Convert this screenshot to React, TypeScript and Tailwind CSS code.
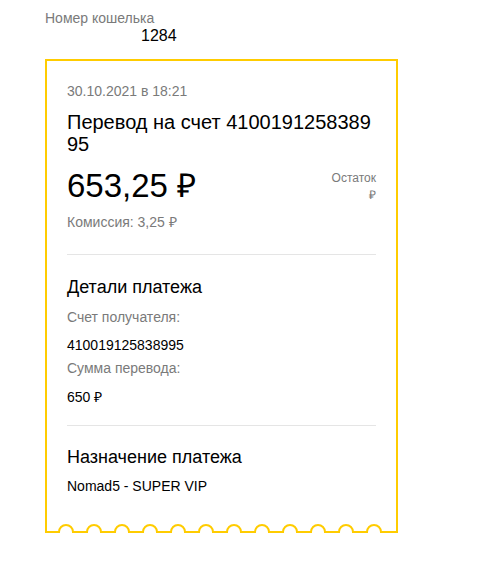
import React from "react";

const arcs = Array.from({ length: 12 }, (_, k) => 14 + 28 * k);

function Wave() {
  let d = "M1 0 V11";
  for (const x of arcs) {
    d += ` H${x} A7 7 0 0 1 ${x + 14} 11`;
  }
  d += " H352 V0";
  return (
    <svg width="353" height="13" viewBox="0 0 353 13" className="block">
      <path d={d} fill="none" stroke="#ffcc00" strokeWidth="2" />
    </svg>
  );
}

export default function App() {
  return (
    <div className="min-h-[568px] w-[482px] bg-white font-['Liberation_Sans',Arial,sans-serif] text-black">
      <div className="pt-[10px] pl-[45px] text-[14px] leading-[16px] text-[#7a7a7a]">Номер кошелька</div>
      <div className="mt-[1px] pl-[141px] text-[16px] leading-[18px]">1284</div>
      <div className="ml-[45px] mt-[14px] w-[353px]">
        <div className="border-x-2 border-t-2 border-[#ffcc00] px-5 pt-[22px] pb-[27px]">
          <div className="text-[14px] leading-[16px] text-[#7a7a7a]">30.10.2021 в 18:21</div>
          <div className="mt-[12px] break-all text-[20px] leading-[22px]">
            Перевод на счет 410019125838995
          </div>
          <div className="mt-[12px] flex items-start justify-between">
            <div className="text-[33px] leading-[38px]">653,25 ₽</div>
            <div className="mt-[3px] text-right text-[12px] leading-[17px] text-[#7a7a7a]">
              <div>Остаток</div>
              <div>₽</div>
            </div>
          </div>
          <div className="mt-[9px] text-[14px] leading-[16px] text-[#7a7a7a]">Комиссия: 3,25 ₽</div>
          <div className="mt-[24px] h-px bg-[#e5e5e5]" />
          <div className="mt-[22px] text-[18px] leading-[21px]">Детали платежа</div>
          <div className="mt-[11px] text-[14px] leading-[16px] text-[#7a7a7a]">Счет получателя:</div>
          <div className="mt-[12px] text-[14px] leading-[16px]">410019125838995</div>
          <div className="mt-[7px] text-[14px] leading-[16px] text-[#7a7a7a]">Сумма перевода:</div>
          <div className="mt-[13px] text-[14px] leading-[16px]">650 ₽</div>
          <div className="mt-[20px] h-px bg-[#e5e5e5]" />
          <div className="mt-[21px] text-[18px] leading-[21px]">Назначение платежа</div>
          <div className="mt-[10px] text-[14px] leading-[16px]">Nomad5 - SUPER VIP</div>
        </div>
        <Wave />
      </div>
    </div>
  );
}
